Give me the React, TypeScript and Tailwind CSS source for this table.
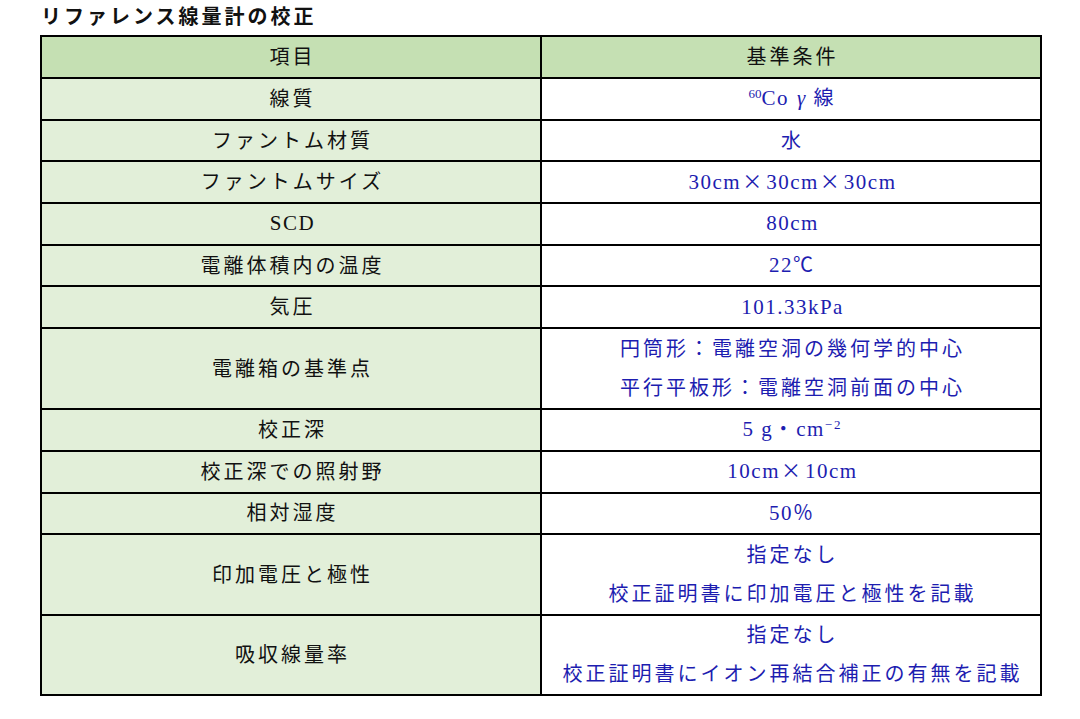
import React from "react";

const FONT = { fontFamily: '"Liberation Serif", "Noto Sans CJK JP", serif' };

const X = () => (
  <span className="mx-[1px]" style={{ fontFamily: '"Noto Sans CJK JP", sans-serif' }}>×</span>
);

const L = ({ children }: { children: React.ReactNode }) => (
  <span className="text-[21px] tracking-[1.5px]">{children}</span>
);

type Row = { label: React.ReactNode; value: React.ReactNode; tall?: boolean; h: string };

const rows: Row[] = [
  {
    label: "線質",
    h: "h-[41.7px]",
    value: (
      <span>
        <sup className="text-[13px] tracking-normal relative top-[-7px] align-baseline">60</sup>
        <L>Co</L> <span className="italic text-[21px] tracking-normal">γ</span> 線
      </span>
    ),
  },
  { label: "ファントム材質", h: "h-[41.7px]", value: "水" },
  {
    label: "ファントムサイズ",
    h: "h-[41.7px]",
    value: (
      <span>
        <L>30cm</L><X /><L>30cm</L><X /><L>30cm</L>
      </span>
    ),
  },
  { label: <L>SCD</L>, h: "h-[41.7px]", value: <L>80cm</L> },
  { label: "電離体積内の温度", h: "h-[41.7px]", value: <span><L>22</L>℃</span> },
  { label: "気圧", h: "h-[41.7px]", value: <L>101.33kPa</L> },
  {
    label: "電離箱の基準点",
    h: "h-[81px]",
    tall: true,
    value: (
      <>
        <div>円筒形：電離空洞の幾何学的中心</div>
        <div>平行平板形：電離空洞前面の中心</div>
      </>
    ),
  },
  {
    label: "校正深",
    h: "h-[41.7px]",
    value: (
      <span>
        <L>5 g</L>・<L>cm</L>
        <sup className="text-[13px] tracking-[2px] relative top-[-7px] align-baseline">−2</sup>
      </span>
    ),
  },
  {
    label: "校正深での照射野",
    h: "h-[41.7px]",
    value: (
      <span>
        <L>10cm</L><X /><L>10cm</L>
      </span>
    ),
  },
  { label: "相対湿度", h: "h-[41.7px]", value: <span><L>50</L>％</span> },
  {
    label: "印加電圧と極性",
    h: "h-[81px]",
    tall: true,
    value: (
      <>
        <div>指定なし</div>
        <div>校正証明書に印加電圧と極性を記載</div>
      </>
    ),
  },
  {
    label: "吸収線量率",
    h: "h-[80px]",
    tall: true,
    value: (
      <>
        <div>指定なし</div>
        <div>校正証明書にイオン再結合補正の有無を記載</div>
      </>
    ),
  },
];

export default function App() {
  return (
    <div className="w-[1080px] h-[719px] bg-white" style={FONT}>
      <div
        className="h-[35px] pl-[41px] pb-[3px] flex items-center text-[20px] font-bold tracking-[3px] text-[#111]"
        style={{ fontFamily: '"Noto Sans CJK JP", sans-serif' }}
      >
        リファレンス線量計の校正
      </div>
      <div className="ml-[40px] w-[1002px] border-2 border-black text-[20px] tracking-[3px]">
        <div className="flex h-[40px] bg-[#c5e0b3] text-[#111]">
          <div className="w-[500px] border-r-2 border-black flex items-center justify-center pl-[3px]">
            項目
          </div>
          <div className="flex-1 flex items-center justify-center pl-[3px]">基準条件</div>
        </div>
        {rows.map((r, i) => (
          <div key={i} className={`flex border-t-2 border-black ${r.h}`}>
            <div className="w-[500px] border-r-2 border-black bg-[#e2efd9] text-[#111] flex items-center justify-center pl-[3px]">
              {r.label}
            </div>
            <div
              className={`flex-1 bg-white text-[#1d1db0] flex flex-col items-center justify-center pl-[3px] ${
                r.tall ? "leading-[39px]" : ""
              }`}
            >
              {r.value}
            </div>
          </div>
        ))}
      </div>
    </div>
  );
}
